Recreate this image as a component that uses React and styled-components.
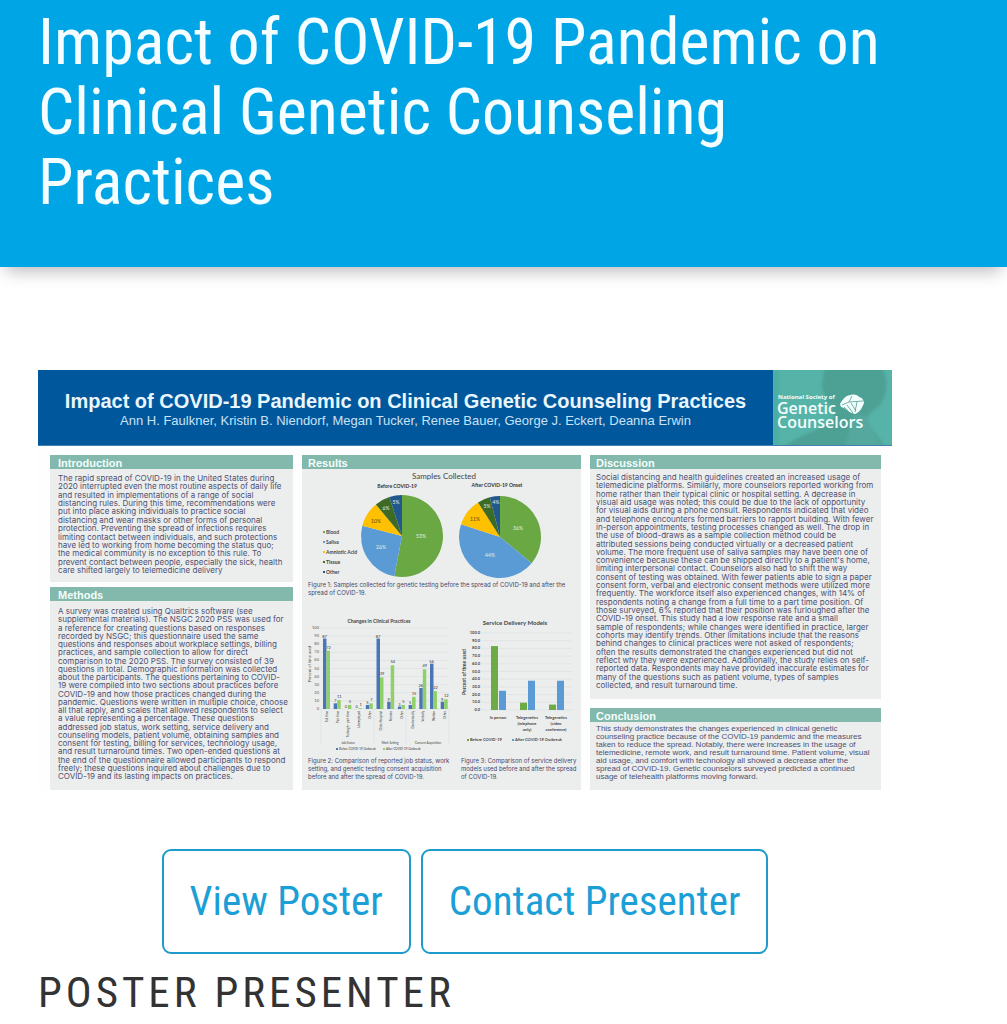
import styled, { createGlobalStyle } from 'styled-components';

const GlobalStyle = createGlobalStyle`
  * {
    box-sizing: border-box;
  }
  body {
    margin: 0;
    background: #ffffff;
    font-family: "Roboto Condensed", Roboto, sans-serif;
  }
  h1, h2, h3, p, figure {
    margin: 0;
    font-weight: 400;
  }
`;

const Header = styled.header`
  padding: 8px 40px 49px 38px;
  background: #00a5e5;
  box-shadow: 0 10px 16px -6px rgba(0, 0, 0, 0.28);
`;

const PageTitle = styled.h1`
  font-size: 64px;
  line-height: 70px;
  color: #f4fdff;
`;

const Main = styled.main`
  padding: 103px 115px 0 38px;
`;

const Poster = styled.article`
  font-family: "Liberation Sans", Arial, sans-serif;
  background: #fefefe;
`;

const Banner = styled.div`
  display: grid;
  grid-template-columns: 735fr 119fr;
  background: #00579b;
  border-bottom: 1px solid #3f7fb2;
`;

const BannerText = styled.div`
  padding: 19px 0 16px;
  text-align: center;
  color: #e9f6ff;
`;

const PosterTitle = styled.h2`
  font-size: 20px;
  line-height: 24px;
  font-weight: 700;
  white-space: nowrap;
`;

const Authors = styled.p`
  font-size: 13px;
  line-height: 16px;
  white-space: nowrap;
  color: #c9e2f7;
`;

const Logo = styled.svg`
  display: block;
  width: 100%;
  height: 75px;
  background: #56b3a8;
`;

const Columns = styled.div`
  display: grid;
  grid-template-columns: 243fr 279fr 291fr;
  gap: 9px;
  min-height: 344px;
  padding: 9px 11px 0 12px;
`;

const Column = styled.div`
  display: flex;
  flex-direction: column;
  min-width: 0;
  gap: ${(props) => props.$gap || 0}px;
`;

const Card = styled.section`
  display: flex;
  flex-direction: column;
  flex: ${(props) => props.$grow || 1} 0 0;
  background: #eceeee;
`;

const CardTitle = styled.h3`
  height: 14px;
  padding: 1px 8px 0;
  background: #83b8ac;
  font-size: 11px;
  line-height: 15px;
  font-weight: 700;
  color: #f2fffc;
  padding-left: ${(props) => props.$indent || 6}px;
`;

const Lines = styled.p`
  flex: 1;
  display: flex;
  flex-direction: column;
  justify-content: space-between;
  padding: ${(props) => props.$pad};
  font-family: ${(props) => (props.$narrow ? '"Liberation Sans", Arial, sans-serif' : 'Inter, "Liberation Sans", sans-serif')};
  font-size: 8px;
  line-height: 8px;
  white-space: nowrap;
  color: #4f5070;
`;

const Chart = styled.svg`
  display: block;
  width: 100%;
  font-family: Lato, "Liberation Sans", sans-serif;
`;

const FigureRow = styled.div`
  display: grid;
  grid-template-columns: 153fr 126fr;
  margin-top: 8px;
`;

const Caption = styled.figcaption`
  padding: 2px 0 0 6px;
  font-family: Inter, "Liberation Sans", sans-serif;
  font-size: 6px;
  line-height: 8px;
  white-space: pre;
  color: #45466a;
`;

const Actions = styled.div`
  display: flex;
  justify-content: center;
  gap: 10px;
  margin-top: 59px;
`;

const OutlineButton = styled.button`
  padding: 27px 26px;
  border: 2px solid #1e9bcb;
  border-radius: 9px;
  background: #ffffff;
  font-family: inherit;
  font-size: 41px;
  line-height: 47px;
  color: #1c9fd6;
  cursor: pointer;
`;

const SectionHeading = styled.h2`
  margin-top: 12px;
  font-size: 43px;
  line-height: 52px;
  letter-spacing: 4px;
  text-transform: uppercase;
  color: #333333;
`;

const introduction = [
  'The rapid spread of COVID-19 in the United States during',
  '2020 interrupted even the most routine aspects of daily life',
  'and resulted in implementations of a range of social',
  'distancing rules. During this time, recommendations were',
  'put into place asking individuals to practice social',
  'distancing and wear masks or other forms of personal',
  'protection. Preventing the spread of infections requires',
  'limiting contact between individuals, and such protections',
  'have led to working from home becoming the status quo;',
  'the medical community is no exception to this rule. To',
  'prevent contact between people, especially the sick, health',
  'care shifted largely to telemedicine delivery',
];

const methods = [
  'A survey was created using Qualtrics software (see',
  'supplemental materials). The NSGC 2020 PSS was used for',
  'a reference for creating questions based on responses',
  'recorded by NSGC; this questionnaire used the same',
  'questions and responses about workplace settings, billing',
  'practices, and sample collection to allow for direct',
  'comparison to the 2020 PSS. The survey consisted of 39',
  'questions in total. Demographic information was collected',
  'about the participants. The questions pertaining to COVID-',
  '19 were compiled into two sections about practices before',
  'COVID-19 and how those practices changed during the',
  'pandemic. Questions were written in multiple choice, choose',
  'all that apply, and scales that allowed respondents to select',
  'a value representing a percentage. These questions',
  'addressed job status, work setting, service delivery and',
  'counseling models, patient volume, obtaining samples and',
  'consent for testing, billing for services, technology usage,',
  'and result turnaround times. Two open-ended questions at',
  'the end of the questionnaire allowed participants to respond',
  'freely; these questions inquired about challenges due to',
  'COVID-19 and its lasting impacts on practices.',
];

const discussion = [
  'Social distancing and health guidelines created an increased usage of',
  'telemedicine platforms. Similarly, more counselors reported working from',
  'home rather than their typical clinic or hospital setting. A decrease in',
  'visual aid usage was noted; this could be due to the lack of opportunity',
  'for visual aids during a phone consult. Respondents indicated that video',
  'and telephone encounters formed barriers to rapport building. With fewer',
  'in-person appointments, testing processes changed as well. The drop in',
  'the use of blood-draws as a sample collection method could be',
  'attributed sessions being conducted virtually or a decreased patient',
  'volume. The more frequent use of saliva samples may have been one of',
  "convenience because these can be shipped directly to a patient's home,",
  'limiting interpersonal contact. Counselors also had to shift the way',
  'consent of testing was obtained. With fewer patients able to sign a paper',
  'consent form, verbal and electronic consent methods were utilized more',
  'frequently. The workforce itself also experienced changes, with 14% of',
  'respondents noting a change from a full time to a part time position. Of',
  'those surveyed, 6% reported that their position was furloughed after the',
  'COVID-19 onset. This study had a low response rate and a small',
  'sample of respondents; while changes were identified in practice, larger',
  'cohorts may identify trends. Other limitations include that the reasons',
  'behind changes to clinical practices were not asked of respondents;',
  'often the results demonstrated the changes experienced but did not',
  'reflect why they were experienced. Additionally, the study relies on self-',
  'reported data. Respondents may have provided inaccurate estimates for',
  'many of the questions such as patient volume, types of samples',
  'collected, and result turnaround time.',
];

const conclusion = [
  'This study demonstrates the changes experienced in clinical genetic',
  'counseling practice because of the COVID-19 pandemic and the measures',
  'taken to reduce the spread. Notably, there were increases in the usage of',
  'telemedicine, remote work, and result turnaround time. Patient volume, visual',
  'aid usage, and comfort with technology all showed a decrease after the',
  'spread of COVID-19. Genetic counselors surveyed predicted a continued',
  'usage of telehealth platforms moving forward.',
];

const sampleTypes = [
  { name: 'Blood', color: '#6aa843' },
  { name: 'Saliva', color: '#5b9bd5' },
  { name: 'Amniotic Acid', color: '#ffc000' },
  { name: 'Tissue', color: '#3d6b26' },
  { name: 'Other', color: '#22598c' },
];

const pies = [
  {
    title: 'Before COVID-19',
    titleX: 95,
    titleY: 19,
    cx: 100,
    cy: 67,
    values: [53, 26, 10, 6, 5],
    labels: [[119, 69], [79, 80], [74, 54], [84, 41], [94, 35]],
  },
  {
    title: 'After COVID-19 Onset',
    titleX: 195,
    titleY: 18,
    cx: 198,
    cy: 68,
    values: [36, 44, 11, 5, 4],
    labels: [[216, 61], [188, 88], [173, 52], [185, 39], [194, 35]],
  },
];

const practices = [
  { name: 'Full time', before: 87, after: 72 },
  { name: 'Part time', before: 7, after: 11 },
  { name: 'Furlough - part time', before: 0, after: 5 },
  { name: 'Unemployed', before: 0, after: 1 },
  { name: 'Other', before: 5, after: 7 },
  { name: 'Clinic/Hospital', before: 87, after: 39 },
  { name: 'Remote', before: 9, after: 54 },
  { name: 'Other', before: 3, after: 5 },
  { name: 'Electronically', before: 5, after: 15 },
  { name: 'Verbally', before: 26, after: 49 },
  { name: 'Written', before: 56, after: 22 },
  { name: 'Other', before: 9, after: 12 },
];

const practiceGroups = [
  { name: 'Job Status', x: 46, end: 72 },
  { name: 'Work Setting', x: 88, end: 104 },
  { name: 'Consent Acquisition', x: 126, end: 147 },
];

const deliveryModels = [
  { lines: ['In person'], before: 83, after: 25 },
  { lines: ['Telegenetics', '(telephone', 'only)'], before: 9.5, after: 38 },
  { lines: ['Telegenetics', '(video', 'conference)'], before: 7, after: 38 },
];

const point = (cx, cy, r, percent) => {
  const angle = (percent / 100) * Math.PI * 2;
  return `${cx + r * Math.sin(angle)} ${cy - r * Math.cos(angle)}`;
};

const Pie = ({ cx, cy, values }) => {
  let total = 0;
  return values.map((value, i) => {
    const start = point(cx, cy, 41, total);
    total += value;
    const end = point(cx, cy, 41, total);
    return (
      <path
        key={sampleTypes[i].name}
        d={`M${cx} ${cy} L${start} A41 41 0 ${value > 50 ? 1 : 0} 1 ${end} Z`}
        fill={sampleTypes[i].color}
      />
    );
  });
};

const SamplesChart = () => (
  <Chart viewBox="0 0 279 110" role="img" aria-label="Samples Collected">
    <text x="142" y="10" fontSize="8" textAnchor="middle" fill="#444">Samples Collected</text>
    {pies.map((pie) => (
      <g key={pie.title}>
        <text x={pie.titleX} y={pie.titleY} fontSize="5" fontWeight="700" textAnchor="middle" fill="#333">
          {pie.title}
        </text>
        <Pie {...pie} />
        {pie.labels.map(([x, y], i) => (
          <text key={i} x={x} y={y} fontSize="5" textAnchor="middle" fill={i === 2 ? '#5c4a10' : '#e4f0e0'}>
            {pie.values[i]}%
          </text>
        ))}
      </g>
    ))}
    {sampleTypes.map((type, i) => (
      <g key={type.name}>
        <rect x="21" y={62 + i * 10} width="2" height="2" fill={type.color} />
        <text x="24" y={65 + i * 10} fontSize="5" fontWeight="700" fill="#444">{type.name}</text>
      </g>
    ))}
  </Chart>
);

const PracticesChart = () => {
  const y = (value) => 104 - value * 0.81;
  return (
    <Chart viewBox="0 0 153 150" role="img" aria-label="Changes in Clinical Practices">
      <text x="77" y="18" fontSize="5" fontWeight="700" textAnchor="middle" fill="#444">
        Changes in Clinical Practices
      </text>
      {[0, 10, 20, 30, 40, 50, 60, 70, 80, 90, 100].map((tick) => (
        <g key={tick}>
          <line x1="19" x2="147" y1={y(tick)} y2={y(tick)} stroke="#dddfe1" strokeWidth="0.7" />
          <text x="17" y={y(tick) + 1} fontSize="4" textAnchor="end" fill="#555">{tick}</text>
        </g>
      ))}
      <text transform="translate(9 59) rotate(-90)" fontSize="4" textAnchor="middle" fill="#444">
        Percent of time used
      </text>
      {practices.map((item, i) => {
        const x = 21 + i * 10.7;
        return (
          <g key={i}>
            <rect x={x} y={y(item.before)} width="3.5" height={104 - y(item.before)} fill="#4a76b8" />
            <rect x={x + 3.5} y={y(item.after)} width="3.5" height={104 - y(item.after)} fill="#8fd168" />
            <text x={x + 1.5} y={y(item.before) - 1} fontSize="4" textAnchor="middle" fill="#333">{item.before}</text>
            <text x={x + 5.5} y={y(item.after) - 2} fontSize="4" textAnchor="middle" fill="#333">{item.after}</text>
            <text transform={`translate(${x + 5} 106) rotate(-90)`} fontSize="3" textAnchor="end" fill="#333">
              {item.name}
            </text>
          </g>
        );
      })}
      <line x1="19" x2="19" y1="104" y2="139" stroke="#dddfe1" strokeWidth="0.7" />
      {practiceGroups.map((group) => (
        <g key={group.name}>
          <line x1={group.end} x2={group.end} y1="104" y2="139" stroke="#dddfe1" strokeWidth="0.7" />
          <text x={group.x} y="139" fontSize="3" textAnchor="middle" fill="#444">{group.name}</text>
        </g>
      ))}
      <rect x="34" y="143" width="2" height="2" fill="#4a76b8" />
      <text x="37" y="145" fontSize="3" fill="#333">Before COVID-19 Outbreak</text>
      <rect x="81" y="143" width="2" height="2" fill="#8fd168" />
      <text x="84" y="145" fontSize="3" fill="#333">After COVID-19 Outbreak</text>
    </Chart>
  );
};

const DeliveryChart = () => {
  const y = (value) => 105 - value * 0.77;
  return (
    <Chart viewBox="0 0 126 150" role="img" aria-label="Service Delivery Models">
      <text x="60" y="20" fontSize="6" fontWeight="700" textAnchor="middle" fill="#444">
        Service Delivery Models
      </text>
      {[0, 10, 20, 30, 40, 50, 60, 70, 80, 90, 100].map((tick) => (
        <g key={tick}>
          <line x1="27" x2="117" y1={y(tick)} y2={y(tick)} stroke="#dddfe1" strokeWidth="0.7" />
          <text x="25" y={y(tick) + 1} fontSize="4" fontWeight="700" textAnchor="end" fill="#444">
            {tick.toFixed(1)}
          </text>
        </g>
      ))}
      <text transform="translate(11 67) rotate(-90)" fontSize="5" fontWeight="700" textAnchor="middle" fill="#444">
        Percent of time used
      </text>
      {deliveryModels.map((model, i) => {
        const x = 36 + i * 29;
        return (
          <g key={i}>
            <rect x={x} y={y(model.before)} width="7" height={105 - y(model.before)} fill="#6cab45" />
            <rect x={x + 8} y={y(model.after)} width="7" height={105 - y(model.after)} fill="#5b9bd5" />
            {model.lines.map((line, row) => (
              <text key={line} x={x + 7} y={114 + row * 6} fontSize="4" fontWeight="700" textAnchor="middle" fill="#444">
                {line}
              </text>
            ))}
          </g>
        );
      })}
      <rect x="12" y="134" width="2" height="2" fill="#6cab45" />
      <text x="15" y="136" fontSize="4" fontWeight="700" fill="#444">Before COVID-19</text>
      <rect x="57" y="134" width="2" height="2" fill="#5b9bd5" />
      <text x="60" y="136" fontSize="4" fontWeight="700" fill="#444">After COVID-19 Outbreak</text>
    </Chart>
  );
};

const SocietyLogo = () => (
  <Logo viewBox="0 0 119 75" preserveAspectRatio="xMinYMid slice" role="img" aria-label="National Society of Genetic Counselors">
    <defs>
      <filter id="soft"><feGaussianBlur stdDeviation="1.6" /></filter>
    </defs>
    <g filter="url(#soft)">
      <path d="M52 -4 H108 C115 6 116 26 106 36 C98 42 92 46 96 54 C100 62 108 68 112 79 H10 C20 66 50 60 60 50 C66 40 44 26 50 8 Z" fill="#49998e" opacity="0.75" />
      <path d="M80 44 L96 46 C94 56 102 66 110 78 H72 Z" fill="#56aaa0" opacity="0.8" />
      <path d="M0 0 H6 V75 H0 Z" fill="#3fa2a0" opacity="0.4" />
    </g>
    <g fill="#f4fffd" fontFamily="Open Sans, sans-serif">
      <text x="5" y="29" fontSize="6" fontWeight="700">National Society of</text>
      <text x="4" y="44" fontSize="16" fontWeight="600">Genetic</text>
      <text x="4" y="58" fontSize="16" fontWeight="600">Counselors</text>
      <path d="M67 34 C69 30 73 25 78 25 C81 24 85 25 86 27 C89 27 91 31 91 33 C89 38 87 42 82 44 L76 42 L71 38 L68 37 Z" />
    </g>
    <g stroke="#4c9d93" strokeWidth="0.8" fill="none">
      <path d="M69 35 L76 32 L90 31" />
      <path d="M79 26 L76 32" />
      <path d="M71 37 L77 43" />
      <path d="M74 35 L80 43" />
      <path d="M78 33 L83 41" />
      <path d="M84 32 L82 42" />
    </g>
  </Logo>
);

const TextCard = ({ title, lines, grow, pad, indent, narrow }) => (
  <Card $grow={grow}>
    <CardTitle $indent={indent}>{title}</CardTitle>
    <Lines $pad={pad} $narrow={narrow}>
      {lines.map((line) => (
        <span key={line}>{line} </span>
      ))}
    </Lines>
  </Card>
);

const App = () => {
  return (
    <>
      <GlobalStyle />
      <Header>
        <PageTitle>Impact of COVID-19 Pandemic on Clinical Genetic Counseling Practices</PageTitle>
      </Header>
      <Main>
        <Poster>
          <Banner>
            <BannerText>
              <PosterTitle>Impact of COVID-19 Pandemic on Clinical Genetic Counseling Practices</PosterTitle>
              <Authors>
                Ann H. Faulkner, Kristin B. Niendorf, Megan Tucker, Renee Bauer, George J. Eckert, Deanna Erwin
              </Authors>
            </BannerText>
            <SocietyLogo />
          </Banner>
          <Columns>
            <Column $gap={5}>
              <TextCard title="Introduction" lines={introduction} grow={127} pad="5px 0 8px 8px" indent={8} />
              <TextCard title="Methods" lines={methods} grow={203} pad="6px 0 10px 8px" indent={8} />
            </Column>
            <Column>
              <Card>
                <CardTitle>Results</CardTitle>
                <figure>
                  <SamplesChart />
                  <Caption>
                    {'Figure 1: Samples collected for genetic testing before the spread of COVID-19 and after the\nspread of COVID-19.'}
                  </Caption>
                </figure>
                <FigureRow>
                  <figure>
                    <PracticesChart />
                    <Caption>
                      {'Figure 2: Comparison of reported job status, work\nsetting, and genetic testing consent acquisition\nbefore and after the spread of COVID-19.'}
                    </Caption>
                  </figure>
                  <figure>
                    <DeliveryChart />
                    <Caption>
                      {'Figure 3: Comparison of service delivery\nmodels used before and after the spread\nof COVID-19.'}
                    </Caption>
                  </figure>
                </FigureRow>
              </Card>
            </Column>
            <Column $gap={9}>
              <TextCard title="Discussion" lines={discussion} grow={244} pad="4px 0 10px 6px" />
              <TextCard title="Conclusion" lines={conclusion} grow={82} pad="3px 0 9px 6px" narrow />
            </Column>
          </Columns>
        </Poster>
        <Actions>
          <OutlineButton type="button">View Poster</OutlineButton>
          <OutlineButton type="button">Contact Presenter</OutlineButton>
        </Actions>
        <SectionHeading>Poster Presenter</SectionHeading>
      </Main>
    </>
  );
};

export default App;
